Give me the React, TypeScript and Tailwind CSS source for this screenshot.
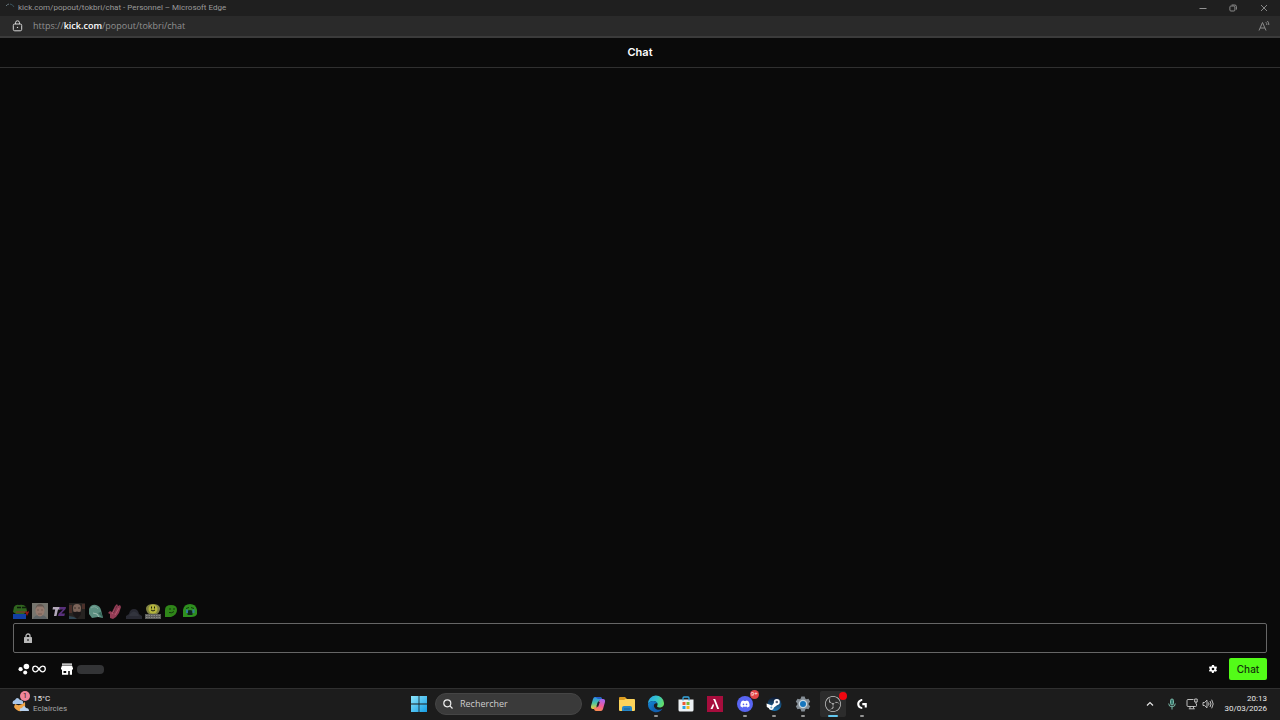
import { ReactNode } from "react";
import { FaDiscord } from "react-icons/fa";
import { SiObsstudio, SiLogitechg } from "react-icons/si";

const TitleBar = () => (
  <header className="flex h-4 items-center bg-[#1f1f1f] pl-1 text-[#9a9a9a]">
    <svg viewBox="0 0 12 12" className="h-3 w-3" fill="none">
      <path d="M2 4a5 5 0 0 1 3-2" stroke="#65767d" />
      <path d="M6 2a5 5 0 0 1 4 3" stroke="#39525c" />
    </svg>
    <h1 className="ml-0.5 flex-1 font-['Roboto',sans-serif] text-[8px] leading-4">
      kick.com/popout/tokbri/chat - Personnel – Microsoft Edge
    </h1>
    <div className="flex">
      <button aria-label="Minimize" className="flex w-[30px] justify-center">
        <svg viewBox="0 0 8 8" className="h-2 w-2" stroke="#929292">
          <path d="M0.5 4.5h7" />
        </svg>
      </button>
      <button aria-label="Restore" className="flex w-[30px] justify-center">
        <svg viewBox="0 0 8 8" className="h-2 w-2" fill="none" stroke="#8a8a8a">
          <rect x="0.9" y="2" width="5" height="5" rx="1" />
          <path d="M2.6 1h3.2a1.6 1.6 0 0 1 1.6 1.6v3" />
        </svg>
      </button>
      <button aria-label="Close" className="flex w-8 justify-center">
        <svg viewBox="0 0 8 8" className="h-2 w-2" stroke="#929292" strokeWidth="0.9">
          <path d="M1 1l6 6M7 1L1 7" />
        </svg>
      </button>
    </div>
  </header>
);

const AddressBar = () => (
  <div className="flex h-[22px] items-center border-b-2 border-[#3b3b3b] bg-[#2a2a2a] pr-2.5 pl-3">
    <svg viewBox="0 0 11 12" className="h-3 w-[11px]" fill="none" stroke="#d6d6d6">
      <rect x="1.3" y="4" width="8.4" height="6.8" rx="1.4" />
      <path d="M3.5 4V2.8a2 2 0 0 1 4 0V4" />
      <circle cx="5.5" cy="7.4" r="0.7" fill="#d6d6d6" stroke="none" />
    </svg>
    <p className="ml-2.5 flex-1 text-[9px] leading-4 text-[#919191]">
      https://<b className="font-semibold text-white">kick.com</b>
      /popout/tokbri/chat
    </p>
    <button aria-label="Read aloud">
      <svg viewBox="0 0 12 12" className="h-3 w-3" fill="none" stroke="#8b8b8b">
        <path d="M1 10.5L4.5 2.5L8 10.5M2.2 8h4.6" />
        <path d="M7.8 2.2a3 3 0 0 1 1 2.8M9.4 1a5 5 0 0 1 1.4 4" />
      </svg>
    </button>
  </div>
);

const emotes: { name: string; art: ReactNode }[] = [
  {
    name: "pepe love",
    art: (
      <>
        <path d="M0 11h13v5H0z" fill="#123fa3" />
        <path d="M1 4q2-3 5-2 5-1 7 2l1 4-3 3H3L0 9z" fill="#30651f" />
        <path d="M4 4.5h4M9 4.5h4" stroke="#0d1b0b" strokeWidth="1.4" />
        <path d="M3 9h9" stroke="#6f4026" strokeWidth="1.5" />
        <path d="M12 9l1.5-1 1 1 1-1 .5 1-2 4z" fill="#8d1717" />
      </>
    ),
  },
  {
    name: "portrait",
    art: (
      <>
        <path d="M0 0h16v16H0z" fill="#77766f" />
        <path d="M1 16q1-4 7-4t7 4z" fill="#5e6466" />
        <ellipse cx="8" cy="7.5" rx="4.5" ry="6" fill="#947a6e" />
        <path d="M3.5 6Q4 1 8 1t4.5 5L11 3.5H5z" fill="#635852" />
        <path d="M5 7h2M9 7h2M6 11h4" stroke="#6c564c" strokeWidth="0.8" />
      </>
    ),
  },
  {
    name: "TZ",
    art: (
      <>
        <path d="M2 4h8L9 6.5H7L5.5 13H3l1.2-6.5H1.5z" fill="#b3a9bb" />
        <path d="M8.5 4H15l-.4 2-4.2 4.4H14L13.3 13H7l.6-2.2L12 6.5H8z" fill="#58307a" />
      </>
    ),
  },
  {
    name: "bearded man",
    art: (
      <>
        <path d="M0 0h16v16H0z" fill="#262321" />
        <path d="M0 2h3v8H0zM13 1h3v5h-3z" fill="#4b302a" />
        <path d="M4 5q0-4 4-4t4 4l-.5 6L8 15l-3.5-4z" fill="#7c6459" />
        <path d="M4 8.5l2 .5 2-.5 2 .5 2-.5v3L8 16l-4-4.5z" fill="#1b1718" />
        <path d="M5 5h2M9 5h2" stroke="#2e2422" strokeWidth="0.8" />
        <path d="M0 13l5 1 3 2H0z" fill="#314653" />
      </>
    ),
  },
  {
    name: "ghost",
    art: (
      <>
        <path d="M1 6q2-5 7-4 4 1 5 5l2 8-5-1-6 1-3-4z" fill="#5c8f81" />
        <path d="M5 10l4 1 2 3" stroke="#a0bdb2" fill="none" />
        <path d="M3 5q4-3 7 1" stroke="#83aa9e" fill="none" />
        <path d="M10 10l3-1 2 6z" fill="#37675a" />
      </>
    ),
  },
  {
    name: "clap",
    art: (
      <>
        <path d="M3 15v-4l-2-1 2-2 2 1 3-6 2-2 1 2 2-1 1 2-2 6-3 4-3 2z" fill="#933c55" />
        <path d="M5 11l4-6M8 12l4-7" stroke="#c4687e" strokeWidth="0.7" />
        <path d="M10 3L6.500 10" stroke="#4c2231" strokeWidth="0.7" />
      </>
    ),
  },
  {
    name: "cloud",
    art: (
      <>
        <path d="M0 16v-3l3-2q1-5 5-5t5 5l3 2v3z" fill="#292a33" />
        <path d="M4 11q4-5 8 0l1 2H3z" fill="#32343d" />
      </>
    ),
  },
  {
    name: "typing",
    art: (
      <>
        <path d="M1 5q1-4 7-4t7 4q0 4-3 6H4Q1 9 1 5z" fill="#818343" />
        <circle cx="8" cy="6" r="4.5" fill="#b4b53c" />
        <path d="M6.5 3.5v2M9.5 3.5v2M6 7q2 2 4 0" stroke="#1d2010" fill="none" />
        <path d="M0 11h16v5H0z" fill="#5c5d5b" />
        <path d="M1 12.5h14M1 14.5h14" stroke="#8a8a86" strokeDasharray="1.5 1" />
      </>
    ),
  },
  {
    name: "smug",
    art: (
      <>
        <path d="M2 14V7q0-5 6-5t6 5-6 7z" fill="#2f8619" />
        <path d="M6 6h2M10 6h2M6 9.5q3 1 5-1" stroke="#123b0c" fill="none" />
      </>
    ),
  },
  {
    name: "cry",
    art: (
      <>
        <path d="M1 14V7q1-6 7-6t7 6v4q-1 3-6 3z" fill="#2e901f" />
        <path d="M4 5.5l3-1M9 4.5l3 1" stroke="#123b0c" />
        <path d="M5.5 9q0-2 2.5-2t2.5 2v3h-5z" fill="#10241e" />
        <path d="M4 6.5h2V10H4zM10.5 6.5h2V10h-2z" fill="#327b97" />
      </>
    ),
  },
];

const Chat = () => (
  <main className="flex flex-1 flex-col bg-[#0a0a0a] font-['Inter',sans-serif] text-white">
    <h2 className="border-b border-[#303030] text-center text-[11px] leading-[29px] font-semibold">
      Chat
    </h2>
    <div className="flex-1" />
    <div className="ml-[13px] grid w-[188px] grid-cols-10">
      {emotes.map((emote) => (
        <button key={emote.name} aria-label={emote.name} className="flex">
          <svg viewBox="0 0 16 16" className="h-4 w-4">
            {emote.art}
          </svg>
        </button>
      ))}
    </div>
    <div className="mx-[13px] mt-1 flex h-[30px] items-center rounded-xs border border-[#666] pl-2.5">
      <svg viewBox="0 0 8 10" className="h-2.5 w-2" fill="none">
        <path d="M2 4.5V3a2 2 0 0 1 4 0v1.5" stroke="#b9b9b9" strokeWidth="1.3" />
        <rect y="4" width="8" height="6" rx="0.6" fill="#b9b9b9" />
        <path d="M4 6v2" stroke="#222" strokeWidth="1.2" />
      </svg>
      <input aria-label="Message" className="ml-2 h-full flex-1 bg-transparent text-[11px] outline-none" />
    </div>
    <div className="flex h-[35px] items-center pr-[13px] pb-[3px] pl-[18px]">
      <button aria-label="Channel points" className="flex items-center gap-0.5">
        <svg viewBox="0 0 12 12" className="h-3 w-3" fill="#fff">
          <circle cx="8.4" cy="3.5" r="2.8" />
          <circle cx="2.6" cy="6.2" r="2.1" />
          <circle cx="7.2" cy="9.5" r="2" />
        </svg>
        <svg viewBox="0 0 14 8" className="h-2 w-3.5" fill="none" stroke="#fff" strokeWidth="1.3">
          <path d="M7 4C5.5 2 4.7 1.2 3.5 1.2a2.8 2.8 0 0 0 0 5.6C4.7 6.8 5.5 6 7 4s2.3-2.8 3.5-2.8a2.8 2.8 0 0 1 0 5.6C9.3 6.8 8.5 6 7 4z" />
        </svg>
      </button>
      <button aria-label="Shop" className="ml-[15px] flex items-center gap-1">
        <svg viewBox="0 0 12 12" className="h-3 w-3" fill="#fff">
          <path d="M1 .5h10v1.3H1zM1 2.5h10l1 2.800v1.200H0V5.300z" />
          <path fillRule="evenodd" d="M1 6h10v5.7H8.800V8H7.200v3.700H1zM2.500 8v2h2.700V8z" />
        </svg>
        <span className="h-[9px] w-[27px] rounded bg-[#333436]" />
      </button>
      <button aria-label="Settings" className="mr-3 ml-auto">
        <svg viewBox="0 0 24 24" className="h-2 w-2" fill="#fff">
          <path
            fillRule="evenodd"
            d="M9 0h6l1 4 2 1 4-1 2 5-3 3v1l3 3-3 4-4-1-2 1-1 4H9l-1-4-2-1-4 1-2-4 3-3v-1L0 9l2-5 4 1 2-1zM12 8a4 4 0 1 0 0 8 4 4 0 0 0 0-8z"
          />
        </svg>
      </button>
      <button className="h-[22px] w-[38px] rounded-xs bg-[#53fc18] text-[10px] font-medium text-[#14330b]">
        Chat
      </button>
    </div>
  </main>
);

const apps: { name: string; icon: ReactNode; open?: boolean; active?: boolean }[] = [
  {
    name: "Copilot",
    icon: (
      <svg viewBox="0 0 16 16" className="h-4 w-4">
        <defs>
          <linearGradient id="copilotA" x1="0" y1="0" x2="0" y2="1">
            <stop stopColor="#2b8df0" />
            <stop offset=".5" stopColor="#4bc4a2" />
            <stop offset="1" stopColor="#f3cf35" />
          </linearGradient>
          <linearGradient id="copilotB" x1="0.6" y1="0" x2="0.3" y2="1">
            <stop stopColor="#a567ee" />
            <stop offset=".5" stopColor="#ef5a9a" />
            <stop offset="1" stopColor="#fb8d4c" />
          </linearGradient>
        </defs>
        <path d="M5 1h5q1.5 0 2 2l.4 1.5H10Q8.7 4.5 8.2 6L6.7 11Q6 13 4.5 13H3q-2.5 0-2-3l2-7q.6-2 2-2z" fill="url(#copilotA)" />
        <path d="M11 15H6q-1.5 0-2-2l-.3-1.5H6q1.3 0 1.8-1.5L9.3 5Q10 3 11.5 3H13q2.5 0 2 3l-2 7q-.6 2-2 2z" fill="url(#copilotB)" />
        <path d="M5 1h5q1.5 0 2 2H8z" fill="#2660ca" />
        <path d="M7.8 6h2L8.3 10.5h-2z" fill="#241c2c" />
      </svg>
    ),
  },
  {
    name: "Explorateur de fichiers",
    icon: (
      <svg viewBox="0 0 18 16" className="h-4 w-[18px]">
        <path d="M1 2q0-1 1-1h5l2 2v3H1z" fill="#dc9c20" />
        <path d="M1 4h5l1.5-1H16q1 0 1 1v10q0 1-1 1H2q-1 0-1-1z" fill="#fbd35b" />
        <path d="M4 15v-3q0-2 2-2h6q2 0 2 2v3z" fill="#2586c6" />
        <path d="M6 13h6" stroke="#145c91" />
      </svg>
    ),
  },
  {
    name: "Microsoft Edge",
    open: true,
    icon: (
      <svg viewBox="0 0 18 18" className="h-[18px] w-[18px]">
        <defs>
          <linearGradient id="edgeTop" x1="0" y1="0.3" x2="1" y2="0.6">
            <stop stopColor="#2ba6e4" />
            <stop offset=".5" stopColor="#35c5cf" />
            <stop offset="1" stopColor="#65df63" />
          </linearGradient>
          <linearGradient id="edgeLow" x1="0" y1="0" x2="1" y2="1">
            <stop stopColor="#1687d5" />
            <stop offset="1" stopColor="#0b4c9c" />
          </linearGradient>
        </defs>
        <path d="M1 9a8 8 0 0 1 16-1c.3 3-2 4.5-4.3 4.5-2 0-3-.7-2.6-1.4C11.6 8.5 9.5 6 6.5 6 3.5 6 1.5 7.5 1 9z" fill="url(#edgeTop)" />
        <path d="M1 9c.5-2 3-3 5.5-3 2 0 3.5 1 4 2.5C7 7.5 5.8 11 8 13.2c2.2 2.1 5.2 1.9 7.5.6A8 8 0 0 1 1 9z" fill="url(#edgeLow)" />
        <path d="M6.7 9.5c-.8 2.3.2 4.5 3 5.5 2 .7 4 .2 5.7-.8a8 8 0 0 1-6.4 2.8C5.5 16 4.5 12 6.7 9.5z" fill="#1461b0" />
      </svg>
    ),
  },
  {
    name: "Microsoft Store",
    icon: (
      <svg viewBox="0 0 16 16" className="h-4 w-4">
        <path d="M.5 3.5h15V14q0 1.5-1.5 1.5H2Q.5 15.5.5 14z" fill="#edf1f4" />
        <path d="M5 4.5V2q0-1 1-1h4q1 0 1 1v2.5" fill="none" stroke="#35a6df" strokeWidth="1.3" />
        <path d="M4.5 6h3v3h-3z" fill="#ed5832" />
        <path d="M8.5 6h3v3h-3z" fill="#79b735" />
        <path d="M4.5 10h3v3h-3z" fill="#28a1df" />
        <path d="M8.5 10h3v3h-3z" fill="#f5b922" />
      </svg>
    ),
  },
  {
    name: "AMD Adrenalin",
    icon: (
      <svg viewBox="0 0 16 16" className="h-4 w-4">
        <path d="M0 0h16v16H0z" fill="#a70d3d" />
        <path d="M6 3h2.2l4 10h-2L7 4.8zM6.2 7.5L7 9.5 5.5 13h-2z" fill="#fff" />
      </svg>
    ),
  },
  {
    name: "Discord",
    open: true,
    icon: (
      <span className="relative flex h-4 w-4 items-center justify-center rounded-full bg-[#5865f2]">
        <FaDiscord className="h-2.5 w-2.5 text-white" />
        <span className="absolute -top-1.5 -right-1.5 h-[9px] w-[9px] rounded-full bg-[#e34549] text-center text-[6px] leading-[9px] text-white">
          9+
        </span>
      </span>
    ),
  },
  {
    name: "Steam",
    open: true,
    icon: (
      <svg viewBox="0 0 16 16" className="h-4 w-4">
        <defs>
          <linearGradient id="steam" x1="0" y1="0" x2="0" y2="1">
            <stop stopColor="#10182f" />
            <stop offset="1" stopColor="#1c7ab8" />
          </linearGradient>
        </defs>
        <circle cx="8.5" cy="8" r="7" fill="url(#steam)" />
        <path d="M.5 7.5L6 9.5l3-4 3 3-4 3q-.5 2.5-2.8 2.5-2 0-2.5-2L.8 11z" fill="#fff" />
        <circle cx="10.8" cy="6" r="3" fill="#fff" />
        <circle cx="10.8" cy="6" r="1.3" fill="#59647c" />
        <circle cx="5.3" cy="11.4" r="1" fill="#6ba1c4" />
      </svg>
    ),
  },
  {
    name: "Paramètres",
    open: true,
    icon: (
      <svg viewBox="0 0 16 16" className="h-4 w-4">
        <path
          d="M6.3.5h3.4l.5 2 1.3.8 2-.6 1.7 3-1.5 1.5v1.6l1.5 1.5-1.7 3-2-.6-1.3.8-.5 2H6.3l-.5-2-1.3-.8-2 .6-1.7-3 1.5-1.5V7.2L.8 5.7l1.7-3 2 .6 1.3-.8z"
          fill="#858e96"
        />
        <circle cx="8" cy="8" r="4.3" fill="#c9d8e2" />
        <circle cx="8" cy="8" r="3" fill="#1675bd" />
      </svg>
    ),
  },
  {
    name: "OBS Studio",
    open: true,
    active: true,
    icon: (
      <span className="relative">
        <SiObsstudio className="h-4 w-4 text-[#c8c8c8]" />
        <span className="absolute -top-1 -right-1.5 h-2 w-2 rounded-full bg-[#f00710]" />
      </span>
    ),
  },
  {
    name: "Logitech G HUB",
    open: true,
    icon: <SiLogitechg className="h-2.5 w-2.5 text-white" />,
  },
];

const Taskbar = () => (
  <footer className="grid h-8 grid-cols-[1fr_auto_1fr] items-center border-t border-[#303030] bg-[#1c1c1c] pb-0.5 text-[#e8e8e8]">
    <button className="ml-3 flex items-center gap-[3px] justify-self-start text-left font-['Roboto',sans-serif] text-[8px] leading-[10px]">
      <span className="relative">
        <svg viewBox="0 0 18 18" className="h-[18px] w-[18px]">
          <path d="M3 9q5 3 10-2 1 7-3 9-5 1-8-4z" fill="#efa347" />
          <path d="M1 9Q-.5 6 3 5q2-4 5 0 4 0 3 4z" fill="#a9c5e7" />
          <path d="M8 16q-1-3 2-3 2-4 4 0 3 0 3 3z" fill="#b8d1ed" />
        </svg>
        <span className="absolute -top-1 right-0 h-2.5 w-2.5 rounded-full bg-[#f0869b] text-center text-[7px] leading-[10px] text-[#28151a]">
          1
        </span>
      </span>
      <span>
        15°C
        <span className="block text-[#a8a8a8]">Eclaircies</span>
      </span>
    </button>

    <div className="flex items-center">
      <button aria-label="Démarrer" className="flex w-8 justify-center">
        <svg viewBox="0 0 16 16" className="h-4 w-4">
          <defs>
            <linearGradient id="start" x1="0" y1="0" x2="1" y2="1">
              <stop stopColor="#8ce5fb" />
              <stop offset="1" stopColor="#159de4" />
            </linearGradient>
          </defs>
          <path d="M0 0h7.6v7.6H0zM8.4 0H16v7.6H8.4zM0 8.4h7.6V16H0zM8.4 8.4H16V16H8.4z" fill="url(#start)" />
        </svg>
      </button>
      <label className="mr-px flex h-[22px] w-[147px] items-center rounded-full border border-[#454545] bg-[#3a3a3a] pl-[7px]">
        <svg viewBox="0 0 10 10" className="h-2.5 w-2.5 shrink-0" fill="none" stroke="#eee" strokeWidth="1.2">
          <circle cx="4.3" cy="4.3" r="3.5" />
          <path d="M6.9 6.9L9.5 9.5" />
        </svg>
        <input
          aria-label="Rechercher"
          placeholder="Rechercher"
          className="ml-[7px] w-full min-w-0 bg-transparent text-[9px] outline-none placeholder:text-[#cecece]"
        />
      </label>
      <div className="grid w-[294px] grid-cols-10 justify-items-center">
        {apps.map((app) => (
          <button
            key={app.name}
            aria-label={app.name}
            className={`relative flex h-[26px] w-[26px] items-center justify-center rounded-xs ${
              app.active ? "bg-[#2c2c2c]" : ""
            }`}
          >
            {app.icon}
            {app.open && (
              <span
                className={`absolute bottom-0 h-0.5 rounded-full ${
                  app.active ? "w-2.5 bg-[#62c8ef]" : "w-1 bg-[#949494]"
                }`}
              />
            )}
          </button>
        ))}
      </div>
    </div>

    <div className="flex items-center justify-self-end pr-[13px]">
      <button aria-label="Icônes masquées" className="mr-3.5">
        <svg viewBox="0 0 8 8" className="h-2 w-2" fill="none" stroke="#e4e4e4" strokeWidth="1.2">
          <path d="M1 5.5l3-3 3 3" />
        </svg>
      </button>
      <button aria-label="Microphone" className="mr-2.5">
        <svg viewBox="0 0 8 12" className="h-3 w-2" fill="none" stroke="#79b7a7">
          <rect x="2.5" y="1" width="3" height="6" rx="1.5" fill="#397b70" />
          <path d="M.7 5.5a3.3 3.3 0 0 0 6.600 0M4 9v2.5" />
        </svg>
      </button>
      <button aria-label="Réseau" className="mr-1">
        <svg viewBox="0 0 12 12" className="h-3 w-3" fill="none" stroke="#d0d0d0" strokeWidth="0.9">
          <path d="M7.5 1.5H2q-1 0-1 1v5q0 1 1 1h7.5q1 0 1-1V6M4 8.5v2M7.5 8.5v2M2.8 10.8h6" />
          <path d="M8.7 1h2.5v3H8.7zM10 4v2" />
        </svg>
      </button>
      <button aria-label="Volume" className="mr-2.5">
        <svg viewBox="0 0 12 12" className="h-3 w-3" fill="none" stroke="#d0d0d0" strokeWidth="0.9">
          <path d="M1 4.5h1.5L5 2.2v7.6L2.5 7.5H1z" />
          <path d="M6.5 4.5q1 1.5 0 3M8 3q2 3 0 6M9.7 1.7q3 4.3 0 8.6" />
        </svg>
      </button>
      <time className="text-right font-['Roboto',sans-serif] text-[8px] leading-[10px]">
        20:13
        <br />
        30/03/2026
      </time>
    </div>
  </footer>
);

const App = () => (
  <div className="flex min-h-screen flex-col bg-[#0a0a0a] font-['Open_Sans','Noto_Sans',sans-serif]">
    <TitleBar />
    <AddressBar />
    <Chat />
    <Taskbar />
  </div>
);

export default App;
